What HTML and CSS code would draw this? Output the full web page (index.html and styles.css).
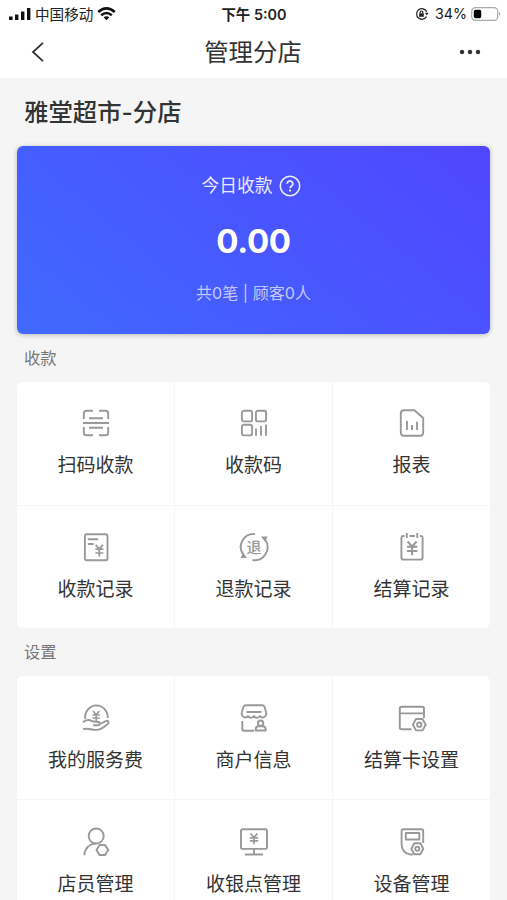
FILE: index.html
```html
<!DOCTYPE html>
<html lang="zh-CN">
<head>
  <meta charset="UTF-8">
  <meta name="viewport" content="width=device-width, initial-scale=1.0">
  <title>管理分店</title>
  <link rel="stylesheet" href="styles.css">
</head>
<body>
  <header>
    <div class="status">
      <div class="status-left">
        <svg width="22" height="14" viewBox="0 0 22 14"><path d="M0 9.5h3.6V13H0zM6 7.5h3.4V13H6zM12 4.5h3.4V13H12zM18 1h3.4v12H18z" fill="#111"/></svg>
        <span>中国移动</span>
        <svg width="19" height="14" viewBox="0 0 19 14" fill="none" stroke="#111" stroke-width="2.5"><path d="M1.2 5Q9.5-2.3 17.8 5M4.2 8.3Q9.5 3.8 14.8 8.3"/><path d="M6.6 10.3Q9.5 8 12.4 10.3L9.5 13.3z" fill="#111" stroke="none"/></svg>
      </div>
      <div class="time">下午 5:00</div>
      <div class="status-right">
        <svg width="14" height="14" viewBox="0 0 14 14" fill="none" stroke="#222" stroke-width="1.2"><path d="M11.6 9.5A5.3 5.3 0 1 1 11.7 4.7"/><path d="M10 5.8h3.6L11.8 8.6z" fill="#222" stroke="none"/><path d="M4.2 6.3h4.6v3.5H4.2z" fill="#222" stroke="none"/><path d="M5.2 6.500V5.300a1.300 1.300 0 0 1 2.600 0v1.200"/></svg>
        <span>34%</span>
        <svg width="30" height="14" viewBox="0 0 30 14"><rect x=".7" y=".7" width="26" height="12.600" rx="3.600" fill="#fff" stroke="#aaa" stroke-width="1.200"/><rect x="2.800" y="2.800" width="7.400" height="8.400" rx="1.600" fill="#000"/><path d="M28 4.800q2.600 2.100 0 4.200z" fill="#aaa"/></svg>
      </div>
    </div>
    <div class="navbar">
      <svg class="back" width="14" height="22" viewBox="0 0 14 22"><path d="M12 1.8L2 11l10 9.2" fill="none" stroke="#333" stroke-width="1.8"/></svg>
      <h1>管理分店</h1>
      <svg class="more" width="22" height="6" viewBox="0 0 22 6" fill="#333"><circle cx="3" cy="3" r="2.2"/><circle cx="11" cy="3" r="2.2"/><circle cx="19" cy="3" r="2.2"/></svg>
    </div>
  </header>

  <main>
    <h2>雅堂超市-分店</h2>
    <section class="card">
      <div class="card-title">
        <span>今日收款</span>
        <svg width="22" height="22" viewBox="0 0 22 22" fill="none" stroke="#e8eaff" stroke-width="1.6"><circle cx="11" cy="11" r="9.7"/><path d="M8.2 8.7a2.8 2.8 0 1 1 4.4 2.3c-1 .7-1.6 1.1-1.6 2.3" stroke-width="1.8"/><circle cx="11" cy="15.6" r="1.1" fill="#e8eaff" stroke="none"/></svg>
      </div>
      <div class="amount">0.00</div>
      <div class="detail">共0笔 | 顾客0人</div>
    </section>

    <h3>收款</h3>
    <div class="grid">
      <div class="item">
        <svg class="icon" viewBox="0 0 28 28"><path d="M1.8 10V4.6Q1.8 1.8 4.6 1.8H11M17 1.8h6.4q2.8 0 2.8 2.8V10M1.8 18v5.4q0 2.8 2.8 2.8H11M17 26.2h6.4q2.8 0 2.8-2.8V18M7 9.3h14M1 14h26M7 18.8h14"/></svg>
        <span>扫码收款</span>
      </div>
      <div class="item">
        <svg class="icon" viewBox="0 0 28 28"><rect x="1.9" y="1.8" width="10.2" height="10.6" rx="2"/><rect x="15.9" y="1.8" width="10.2" height="10.6" rx="2"/><rect x="1.9" y="15.8" width="10.2" height="10.6" rx="2"/><path d="M16 19.5v7.2M21 17v9.7M26 15.5v11.2"/></svg>
        <span>收款码</span>
      </div>
      <div class="item">
        <svg class="icon" viewBox="0 0 28 28"><path d="M6 1.2h10.4L25.2 9v14.6q0 3.2-3.2 3.2H6q-3.2 0-3.2-3.2V4.4Q2.8 1.2 6 1.2zM9 12v9M14 16v5M19 12.8V21"/></svg>
        <span>报表</span>
      </div>
      <div class="item">
        <svg class="icon" viewBox="0 0 28 28"><rect x="2.9" y="1.2" width="22.6" height="26" rx="1.8"/><path d="M5.8 6.2h10.4M5.8 11h5.8"/><path d="M13.6 11.8l3.7 4 3.7-4M13.4 16.2h8M13.4 20h8M17.3 16v7.6" stroke-width="1.7"/></svg>
        <span>收款记录</span>
      </div>
      <div class="item">
        <svg class="icon" viewBox="0 0 28 28"><path d="M15 1A13 13 0 0 0 3.2 21.5M12.5 27A13 13 0 0 0 25.4 7"/><path d="M7 25H.4l2.8-5.2zM21 3.6h6.6l-2.6 5.2z" fill="#999" stroke="none"/><text x="14" y="19.6" text-anchor="middle">退</text></svg>
        <span>退款记录</span>
      </div>
      <div class="item">
        <svg class="icon" viewBox="0 0 28 28"><path d="M6.5 3H5.4Q3.4 3 3.4 5v19.4q0 2.200 2.200 2.200h16.800q2.200 0 2.200-2.200V5q0-2-2-2H22M11.500 3h5.500M8.800 0v5M19.300 0v5M9.600 8.500l4.500 5 4.500-5M9 13.800h10.400M9 18h10.400M14.100 13.500v8.800"/></svg>
        <span>结算记录</span>
      </div>
    </div>

    <h3>设置</h3>
    <div class="grid settings">
      <div class="item">
        <svg class="icon" viewBox="0 0 28 28"><path d="M3.200 14.800A11.700 11.700 0 0 1 14.500 1.400 11.700 11.700 0 0 1 25.700 14"/><path d="M11 7l3.200 3.700L17.400 7M10.500 11h7.400M10.500 14h7.400M14.200 11v6" stroke-width="1.600"/><path d="M1 18.200c3-2.800 6.200-2.800 9.200-1l5.600.8c3 .5 2.600 3.200-.4 3.200h-4.200M17.800 20l6-2.900c2.600-1 3.800 1.400 1.800 3-4.800 3.900-7.200 6-12.600 5.800-4.500-.3-7-2.100-12-.7"/></svg>
        <span>我的服务费</span>
      </div>
      <div class="item">
        <svg class="icon" viewBox="0 0 28 28"><path d="M6 1.200h16q2 0 2.600 1.800l1.600 5.600c.7 4.800-4.200 6-6.200 3.500-2 2.300-4.500 2.300-6 0-1.500 2.300-4 2.300-6 0-2 2.500-6.900 1.300-6.200-3.500L3.400 3Q4 1.200 6 1.200zM6.500 8h15M2.300 17v8q0 1.700 1.700 1.700h10"/><circle cx="20.600" cy="19.200" r="2.700"/><path d="M15.600 26.500v-1q0-3.300 3.300-3.300h3.500q3.300 0 3.300 3.300v1z"/></svg>
        <span>商户信息</span>
      </div>
      <div class="item">
        <svg class="icon" viewBox="0 0 28 28"><path d="M13.500 25.200H3.600q-1.800 0-1.800-1.800V4.600q0-1.800 1.800-1.800h20.600q1.800 0 1.800 1.800v9.400M2 9.400h24M18 15h6.500l3.200 5.700-3.200 5.700H18l-3.200-5.700z"/><circle cx="21.300" cy="20.700" r="2.200"/></svg>
        <span>结算卡设置</span>
      </div>
      <div class="item">
        <svg class="icon" viewBox="0 0 28 28"><circle cx="14.200" cy="8" r="7.500"/><path d="M2.300 27.200C2.800 19.500 8 15.800 13.800 15.500M17.500 17h5.600l3.200 5-3.200 5h-5.600l-3-5z"/></svg>
        <span>店员管理</span>
      </div>
      <div class="item">
        <svg class="icon" viewBox="0 0 28 28"><rect x="1" y="1.300" width="26" height="19.600" rx="1.500"/><path d="M14 21v5.200M5 26.500h18"/><path d="M10.500 5.500l3.500 3.800 3.500-3.800M9.800 9.800h8.400M9.800 12.800h8.400M14 9.500v6.800" stroke-width="1.700"/></svg>
        <span>收银点管理</span>
      </div>
      <div class="item">
        <svg class="icon" viewBox="0 0 28 28"><path d="M15 26.500H12.500Q3.600 25 3.600 16V3Q3.600 1.200 5.400 1.200h18q1.800 0 1.800 1.800v12M7.800 5h13.500v6.500H7.800zM16.300 15.300h6l3 5.500-3 5.500h-6l-3-5.500z"/><circle cx="19.300" cy="20.800" r="2.100"/></svg>
        <span>设备管理</span>
      </div>
    </div>
  </main>
</body>
</html>
```
FILE: styles.css
```css
* {
  box-sizing: border-box;
}
body {
  margin: 0;
  height: 900px;
  overflow: hidden;
  background: #f5f5f5;
  color: #333;
  font-family: Inter, "Noto Sans CJK SC", sans-serif;
}
header {
  height: 78px;
  background: #fff;
}
svg {
  display: block;
  flex: none;
  overflow: visible;
}
.status {
  display: grid;
  grid-template-columns: 1fr auto 1fr;
  align-items: center;
  height: 27px;
  padding: 0 6px 0 9px;
  font-size: 14.6px;
  color: #222;
}
.status-left, .status-right {
  display: flex;
  align-items: center;
  gap: 4px;
}
.status-right {
  justify-content: flex-end;
}
.status-right span {
  margin-left: 2px;
  font-size: 14.3px;
}
.time {
  padding-right: 2px;
  font-weight: 600;
  font-size: 14.4px;
}
.navbar {
  display: flex;
  align-items: center;
  justify-content: space-between;
  height: 50px;
  padding: 0 26px 0 31px;
}
.navbar h1 {
  margin: 0;
  padding-left: 2px;
  font-size: 24.4px;
  line-height: 36px;
  font-weight: 400;
}
main {
  padding: 0 17px;
}
h2 {
  margin: 0;
  padding: 16px 7px 0;
  height: 68px;
  font-size: 24.4px;
  line-height: 36px;
  font-weight: 500;
}
.card {
  height: 188px;
  padding-top: 27px;
  border-radius: 6px;
  background: linear-gradient(40deg, #4069ff, #5046ff);
  box-shadow: 0 1px 5px rgba(0, 0, 0, 0.25);
  color: #fff;
  text-align: center;
}
.card-title {
  display: flex;
  justify-content: center;
  align-items: center;
  gap: 6px;
  height: 26px;
  padding-right: 5px;
  font-size: 17.8px;
  line-height: 26px;
  color: #e8eaff;
}
.amount {
  margin-top: 20px;
  font-size: 33px;
  line-height: 44px;
  font-weight: 700;
  letter-spacing: -0.3px;
}
.detail {
  margin-top: 18px;
  font-size: 16.1px;
  line-height: 24px;
  color: #c3c9ff;
}
h3 {
  margin: 0;
  padding-left: 7px;
  height: 48px;
  font-size: 16.3px;
  line-height: 48px;
  font-weight: 400;
  color: #777;
}
.grid {
  display: grid;
  grid-template-columns: repeat(3, 1fr);
  grid-auto-rows: 122.5px;
  gap: 1px;
  border-radius: 6px;
  overflow: hidden;
  background: #f5f5f5;
}
.settings {
  grid-auto-rows: 123px;
}
.item {
  display: flex;
  flex-direction: column;
  align-items: center;
  gap: 14px;
  padding-top: 27px;
  background: #fff;
  font-size: 19px;
  line-height: 30px;
}
.settings .item {
  padding-top: 28px;
}
.icon {
  width: 28px;
  height: 28px;
  fill: none;
  stroke: #999;
  stroke-width: 1.9;
  stroke-linejoin: round;
}
.icon text {
  font-size: 15px;
  font-weight: 500;
  fill: #999;
  stroke: none;
}
```
